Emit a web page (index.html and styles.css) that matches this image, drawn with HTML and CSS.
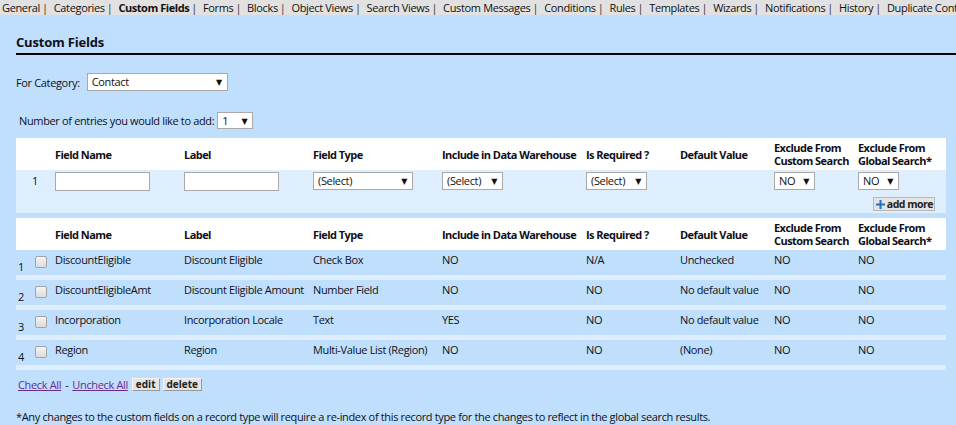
FILE: index.html
```html
<!DOCTYPE html>
<html>
<head>
<meta charset="utf-8">
<link rel="stylesheet" href="styles.css">
</head>
<body>
<div class="nav">
  <span class="tab">General</span><span class="sep">|</span>
  <span class="tab">Categories</span><span class="sep">|</span>
  <span class="tab active">Custom Fields</span><span class="sep">|</span>
  <span class="tab">Forms</span><span class="sep">|</span>
  <span class="tab">Blocks</span><span class="sep">|</span>
  <span class="tab">Object Views</span><span class="sep">|</span>
  <span class="tab">Search Views</span><span class="sep">|</span>
  <span class="tab">Custom Messages</span><span class="sep">|</span>
  <span class="tab">Conditions</span><span class="sep">|</span>
  <span class="tab">Rules</span><span class="sep">|</span>
  <span class="tab">Templates</span><span class="sep">|</span>
  <span class="tab">Wizards</span><span class="sep">|</span>
  <span class="tab">Notifications</span><span class="sep">|</span>
  <span class="tab">History</span><span class="sep">|</span>
  <span class="tab">Duplicate Control</span>
</div>
<div class="main">
  <h1 class="title">Custom Fields</h1>
  <div class="cat-row">
    <span class="lbl">For Category:</span>
    <span class="sel sel-cat"><span class="val">Contact</span><span class="arr">▼</span></span>
  </div>
  <div class="num-row">
    <span class="lbl">Number of entries you would like to add:</span>
    <span class="sel sel-num"><span class="val">1</span><span class="arr">▼</span></span>
  </div>

  <table class="grid add-grid">
    <colgroup>
      <col class="c-n"><col class="c-fn"><col class="c-lb"><col class="c-ft"><col class="c-dw"><col class="c-rq"><col class="c-dv"><col class="c-cs"><col class="c-gs">
    </colgroup>
    <thead>
      <tr>
        <th></th><th>Field Name</th><th>Label</th><th>Field Type</th><th>Include in Data Warehouse</th><th>Is Required ?</th><th>Default Value</th><th>Exclude From<br>Custom Search</th><th>Exclude From<br>Global Search*</th>
      </tr>
    </thead>
    <tbody>
      <tr class="in-row">
        <td class="idx">1</td>
        <td><span class="txt"></span></td>
        <td><span class="txt"></span></td>
        <td><span class="sel sel-ft"><span class="val">(Select)</span><span class="arr">▼</span></span></td>
        <td><span class="sel sel-dw"><span class="val">(Select)</span><span class="arr">▼</span></span></td>
        <td><span class="sel sel-dw"><span class="val">(Select)</span><span class="arr">▼</span></span></td>
        <td></td>
        <td><span class="sel sel-no"><span class="val">NO</span><span class="arr">▼</span></span></td>
        <td><span class="sel sel-no"><span class="val">NO</span><span class="arr">▼</span></span></td>
      </tr>
      <tr class="more-row">
        <td colspan="9"><span class="btn more"><svg class="plus" width="9" height="9" viewBox="0 0 9 9"><path d="M3.5 0h2v3.5H9v2H5.5V9h-2V5.5H0v-2h3.5z" fill="#1f6fc5"/></svg>add more</span></td>
      </tr>
    </tbody>
  </table>

  <table class="grid list-grid">
    <colgroup>
      <col class="c-i"><col class="c-cb"><col class="c-fn"><col class="c-lb"><col class="c-ft"><col class="c-dw"><col class="c-rq"><col class="c-dv"><col class="c-cs"><col class="c-gs">
    </colgroup>
    <thead>
      <tr>
        <th></th><th></th><th>Field Name</th><th>Label</th><th>Field Type</th><th>Include in Data Warehouse</th><th>Is Required ?</th><th>Default Value</th><th>Exclude From<br>Custom Search</th><th>Exclude From<br>Global Search*</th>
      </tr>
    </thead>
    <tbody>
      <tr>
        <td class="idx">1</td><td class="cbc"><span class="cb"></span></td><td>DiscountEligible</td><td>Discount Eligible</td><td>Check Box</td><td>NO</td><td>N/A</td><td>Unchecked</td><td>NO</td><td>NO</td>
      </tr>
      <tr>
        <td class="idx">2</td><td class="cbc"><span class="cb"></span></td><td>DiscountEligibleAmt</td><td>Discount Eligible Amount</td><td>Number Field</td><td>NO</td><td>NO</td><td>No default value</td><td>NO</td><td>NO</td>
      </tr>
      <tr>
        <td class="idx">3</td><td class="cbc"><span class="cb"></span></td><td>Incorporation</td><td>Incorporation Locale</td><td>Text</td><td>YES</td><td>NO</td><td>No default value</td><td>NO</td><td>NO</td>
      </tr>
      <tr>
        <td class="idx">4</td><td class="cbc"><span class="cb"></span></td><td>Region</td><td>Region</td><td>Multi-Value List (Region)</td><td>NO</td><td>NO</td><td>(None)</td><td>NO</td><td>NO</td>
      </tr>
    </tbody>
  </table>

  <div class="actions">
    <a class="lnk" href="#">Check All</a><span class="dash">-</span><a class="lnk" href="#">Uncheck All</a>
    <span class="btn small">edit</span><span class="btn small">delete</span>
  </div>

  <p class="note">*Any changes to the custom fields on a record type will require a re-index of this record type for the changes to reflect in the global search results.</p>
</div>
</body>
</html>
```

FILE: styles.css
```css
html, body {
  margin: 0;
  padding: 0;
}
body {
  background: #bfdffd;
  font-family: "Open Sans", "DejaVu Sans", sans-serif;
  font-size: 11px;
  color: #101018;
  letter-spacing: -0.35px;
  overflow: hidden;
}
.nav {
  background: #e1e1e1;
  height: 15px;
  line-height: 15px;
  white-space: nowrap;
  overflow: hidden;
  padding-left: 2px;
  font-size: 11px;
}
.nav .tab {
  color: #111;
}
.nav .active {
  font-weight: bold;
  letter-spacing: -0.45px;
}
.nav .sep {
  color: #333;
  margin: 0 3.5px 0 2px;
}
.main {
  padding-left: 16px;
}
.title {
  margin: 19px 0 0 0;
  font-size: 13px;
  line-height: 16px;
  font-weight: bold;
  letter-spacing: -0.2px;
  padding-bottom: 3px;
  border-bottom: 2px solid #000;
}
.cat-row {
  margin-top: 18px;
  display: flex;
  align-items: center;
  gap: 7px;
  height: 18px;
}
.num-row {
  margin-top: 21px;
  padding-left: 3px;
  display: flex;
  align-items: center;
  gap: 3px;
  height: 17px;
}
.sel {
  display: inline-flex;
  align-items: center;
  justify-content: space-between;
  box-sizing: border-box;
  background: #fff;
  border: 1px solid #a9a9a9;
  padding: 0 5px 0 4px;
  height: 18px;
  line-height: 16px;
  color: #111;
}
.sel .arr {
  font-size: 8px;
  color: #111;
}
.sel-cat { width: 141px; }
.sel-num { width: 36px; height: 17px; }
.sel-ft { width: 100px; }
.sel-dw { width: 61px; }
.sel-no { width: 41px; }

.grid {
  border-collapse: separate;
  border-spacing: 0;
  table-layout: fixed;
  width: 930px;
}
.grid th {
  background: #fff;
  padding: 3px 0 3px 1px;
  text-align: left;
  font-weight: bold;
  line-height: 13px;
  letter-spacing: -0.55px;
  vertical-align: middle;
  white-space: nowrap;
}
.grid td {
  padding: 0 0 0 1px;
  vertical-align: top;
  white-space: nowrap;
}
.c-n { width: 38px; }
.c-i { width: 17px; }
.c-cb { width: 21px; }
.c-fn { width: 129px; }
.c-lb { width: 129px; }
.c-ft { width: 129px; }
.c-dw { width: 144px; }
.c-rq { width: 94px; }
.c-dv { width: 94px; }
.c-cs { width: 84px; }
.c-gs { width: 89px; }

.add-grid {
  margin-top: 9px;
}
.add-grid tbody td {
  background: #dfeefd;
}
.in-row td {
  padding-top: 2px;
  padding-bottom: 3px;
  line-height: 13px;
}
.in-row td.idx {
  text-align: center;
  padding: 4px 0 7px 0;
}
.txt {
  display: block;
  box-sizing: border-box;
  width: 95px;
  height: 19px;
  background: #fff;
  border: 1px solid #a9a9a9;
}
.more-row td {
  text-align: right;
  padding: 3px 11px 2px 0;
  line-height: 14px;
}
.btn {
  display: inline-flex;
  align-items: center;
  box-sizing: border-box;
  background: #e4e4e4;
  border: 1px solid;
  border-color: #f6f6f6 #9a9a9a #9a9a9a #f6f6f6;
  font-weight: bold;
  color: #222;
  line-height: 11px;
  vertical-align: top;
}
.more {
  height: 14px;
  padding: 0 1px 0 2px;
  gap: 2px;
  font-size: 10.5px;
  letter-spacing: -0.5px;
  outline: 1px solid #b8b8b8;
  outline-offset: -1px;
  white-space: nowrap;
}
.plus {
  flex: none;
}

.list-grid {
  margin-top: 5px;
}
.list-grid tbody td {
  padding-top: 3px;
  padding-bottom: 9px;
  line-height: 13px;
  border-bottom: 5px solid #dfeefd;
}
.list-grid tbody td.idx {
  padding: 10px 0 2px 2px;
}
.list-grid tbody td.cbc {
  padding: 6px 0 7px 2px;
  line-height: 12px;
}
.cb {
  display: block;
  width: 12px;
  height: 12px;
  box-sizing: border-box;
  border: 1px solid #a3a3a3;
  border-radius: 2px;
  background: linear-gradient(#f4f4f4, #dcdcdc);
}

.actions {
  margin-top: 7px;
  padding-left: 2px;
  display: flex;
  align-items: center;
  height: 14px;
}
.lnk {
  color: #6a2b8e;
  text-decoration: underline;
}
.dash {
  margin: 0 4px;
}
.small {
  height: 13px;
  padding: 0 3px;
  margin-left: 4px;
  font-size: 10px;
  letter-spacing: 0;
}
.small + .small {
  margin-left: 3px;
}
.note {
  margin: 19px 0 0 0;
  line-height: 14px;
  font-size: 11px;
}
```
